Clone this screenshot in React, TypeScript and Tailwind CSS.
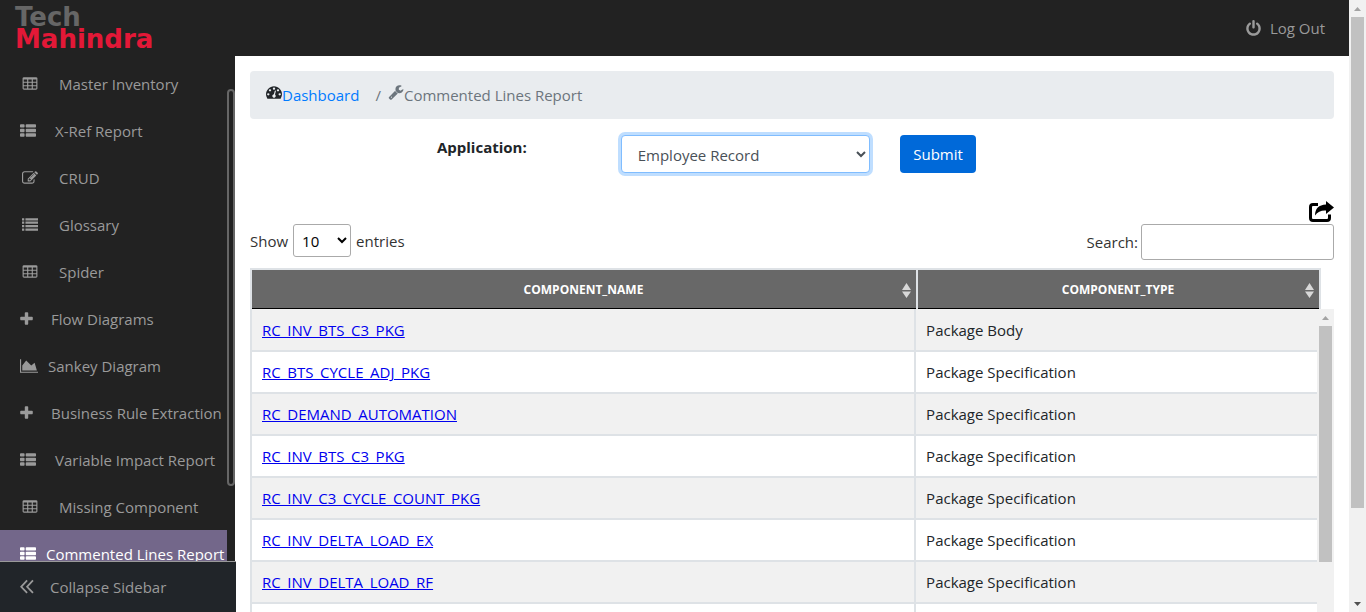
import React from 'react';

type IconName =
  | 'table'
  | 'thList'
  | 'edit'
  | 'list'
  | 'plus'
  | 'area'
  | 'wrench'
  | 'power'
  | 'gauge'
  | 'collapse';

const cell = 'v-192q0-14-9-23t-23-9h-320q-14 0-23 9t-9 23v192q0 14 9 23t23 9h320q14 0 23-9t9-23z';
const tablePath =
  [576, 1088, 1600].map((x) => [608, 992, 1376].map((y) => `M${x} ${y}${cell}`).join('')).join('') +
  'M1728 288v1088q0 66-47 113t-113 47h-1344q-66 0-113-47t-47-113v-1088q0-66 47-113t113-47h1344q66 0 113 47t47 113z';

const thListPath = [224, 736, 1248]
  .map(
    (y) =>
      `M512 ${y}v192q0 40-28 68t-68 28h-320q-40 0-68-28t-28-68v-192q0-40 28-68t68-28h320q40 0 68 28t28 68z` +
      `M1792 ${y}v192q0 40-28 68t-68 28h-960q-40 0-68-28t-28-68v-192q0-40 28-68t68-28h960q40 0 68 28t28 68z`,
  )
  .join('');

const listPath = [128, 512, 896, 1280].map((y) => `M0 ${y}h256v256h-256zM384 ${y}h1408v256h-1408z`).join('');

const icons: Record<IconName, { box: string; d: string }> = {
  table: { box: '0 0 1792 1792', d: tablePath },
  thList: { box: '0 0 1792 1792', d: thListPath },
  list: { box: '0 0 1792 1792', d: listPath },
  edit: {
    box: '0 0 1792 1792',
    d: 'M888 1184l116-116-152-152-116 116v56h96v96h56zm440-720q-16-16-33 1l-350 350q-17 17-1 33t33-1l350-350q17-17 1-33zm80 594v190q0 119-84.5 203.5t-203.5 84.5h-832q-119 0-203.5-84.5t-84.5-203.5v-832q0-119 84.5-203.5t203.5-84.5h832q63 0 117 25 15 7 18 23 3 17-9 29l-49 49q-14 14-32 8-23-6-45-6h-832q-66 0-113 47t-47 113v832q0 66 47 113t113 47h832q66 0 113-47t47-113v-126q0-13 9-22l64-64q15-15 35-7t20 29zm-96-738l288 288-672 672h-288v-288zm444 132l-92 92-288-288 92-92q28-28 68-28t68 28l152 152q28 28 28 68t-28 68z',
  },
  plus: {
    box: '192 0 1408 1792',
    d: 'M1600 736v192q0 40-28 68t-68 28h-416v416q0 40-28 68t-68 28h-192q-40 0-68-28t-28-68v-416h-416q-40 0-68-28t-28-68v-192q0-40 28-68t68-28h416v-416q0-40 28-68t68-28h192q40 0 68 28t28 68v416h416q40 0 68 28t28 68z',
  },
  area: { box: '0 0 2048 1792', d: 'M2048 1536v128H0V128h128v1408h1920zM1664 512l256 896H256V832l448-576 576 576z' },
  wrench: {
    box: '0 0 1792 1792',
    d: 'M448 1472q0-26-19-45t-45-19-45 19-19 45 19 45 45 19 45-19 19-45zm644-420l-682 682q-37 37-90 37-52 0-91-37l-106-108q-38-36-38-90 0-53 38-91l681-681q39 98 114.5 173.5t173.5 114.5zm634-435q0 39-23 106-47 134-164.5 217.5t-258.5 83.5q-185 0-316.5-131.5t-131.5-316.5 131.5-316.5 316.5-131.5q58 0 121.5 16.5t107.5 46.5q16 11 16 28t-16 28l-293 169v224l193 107q5-3 79-48.5t135.5-81 70.5-35.5q15 0 23.5 10t8.5 25z',
  },
  power: {
    box: '0 0 1792 1792',
    d: 'M1664 896q0 156-61 298t-164 245-245 164-298 61-298-61-245-164-164-245-61-298q0-182 80.5-343t226.5-270q43-32 95.5-25t83.5 50q32 42 24.5 94.5t-49.5 84.5q-98 74-151.5 181t-53.5 228q0 104 40.5 198.5t109.5 163.5 163.5 109.5 198.5 40.5 198.5-40.5 163.5-109.5 109.5-163.5 40.5-198.5q0-121-53.5-228t-151.5-181q-42-32-49.5-84.5t24.5-94.5q31-43 84-50t95 25q146 109 226.5 270t80.5 343zm-640-768v640q0 52-38 90t-90 38-90-38-38-90v-640q0-52 38-90t90-38 90 38 38 90z',
  },
  gauge: {
    box: '0 0 1792 1792',
    d: 'M384 1152q0-53-37.5-90.5t-90.5-37.5-90.5 37.5-37.5 90.5 37.5 90.5 90.5 37.5 90.5-37.5 37.5-90.5zm192-448q0-53-37.5-90.5t-90.5-37.5-90.5 37.5-37.5 90.5 37.5 90.5 90.5 37.5 90.5-37.5 37.5-90.5zm428 481l101-382q6-26-7.5-48.5t-38.5-29.5-48 6.5-30 39.5l-101 382q-60 5-107 43.5t-63 98.5q-20 77 20 146t117 89 146-20 89-117q16-60-6-117t-72-91zm660-33q0-53-37.5-90.5t-90.5-37.5-90.5 37.5-37.5 90.5 37.5 90.5 90.5 37.5 90.5-37.5 37.5-90.5zm-640-640q0-53-37.5-90.5t-90.5-37.5-90.5 37.5-37.5 90.5 37.5 90.5 90.5 37.5 90.5-37.5 37.5-90.5zm448 192q0-53-37.5-90.5t-90.5-37.5-90.5 37.5-37.5 90.5 37.5 90.5 90.5 37.5 90.5-37.5 37.5-90.5zm320 448q0 261-141 483-19 29-54 29h-1402q-35 0-54-29-141-221-141-483 0-182 71-348t191-286 286-191 348-71 348 71 286 191 191 286 71 348z',
  },
  collapse: {
    box: '0 0 1408 1792',
    d: 'M650 170l130 130-540 560 540 560-130 130-650-690zM1240 170l130 130-540 560 540 560-130 130-650-690z',
  },
};

function Icon({ name, className }: { name: IconName; className: string }) {
  return (
    <svg viewBox={icons[name].box} className={`shrink-0 fill-current ${className}`} aria-hidden="true">
      <path fillRule="evenodd" d={icons[name].d} />
    </svg>
  );
}

const wide = 'h-4 w-4 ml-[22px] mr-[21px]';
const block = 'h-4 w-4 ml-5 mr-[19px]';
const cross = 'h-4 w-[13px] ml-5 mr-[18px]';

const menu: { label: string; icon: IconName; spacing: string; active?: boolean }[] = [
  { label: 'Master Inventory', icon: 'table', spacing: wide },
  { label: 'X-Ref Report', icon: 'thList', spacing: block },
  { label: 'CRUD', icon: 'edit', spacing: wide },
  { label: 'Glossary', icon: 'list', spacing: wide },
  { label: 'Spider', icon: 'table', spacing: wide },
  { label: 'Flow Diagrams', icon: 'plus', spacing: cross },
  { label: 'Sankey Diagram', icon: 'area', spacing: 'h-4 w-[18px] ml-5 mr-[10px]' },
  { label: 'Business Rule Extraction', icon: 'plus', spacing: cross },
  { label: 'Variable Impact Report', icon: 'thList', spacing: block },
  { label: 'Missing Component', icon: 'table', spacing: wide },
  { label: 'Commented Lines Report', icon: 'thList', spacing: 'h-4 w-4 ml-5 mr-[10px]', active: true },
];

const rows: [string, string][] = [
  ['RC_INV_BTS_C3_PKG', 'Package Body'],
  ['RC_BTS_CYCLE_ADJ_PKG', 'Package Specification'],
  ['RC_DEMAND_AUTOMATION', 'Package Specification'],
  ['RC_INV_BTS_C3_PKG', 'Package Specification'],
  ['RC_INV_C3_CYCLE_COUNT_PKG', 'Package Specification'],
  ['RC_INV_DELTA_LOAD_EX', 'Package Specification'],
  ['RC_INV_DELTA_LOAD_RF', 'Package Specification'],
  ['', ''],
];

function Arrow({ down = false, className }: { down?: boolean; className: string }) {
  return (
    <span className="flex h-[17px] shrink-0 items-center justify-center">
      <svg viewBox="0 0 7 4" className={`h-1 w-[7px] fill-current ${className}`} aria-hidden="true">
        <path d={down ? 'M0 0h7L3.500 4z' : 'M0 4h7L3.500 0z'} />
      </svg>
    </span>
  );
}

function SortHeader({ children }: { children: string }) {
  return (
    <th className="border-2 border-b border-[#dee2e6] border-b-black p-0 font-bold">
      <button type="button" className="flex h-[38px] w-full items-center pt-0.5 pr-[5px] pl-[13px]">
        <span className="flex-1">{children}</span>
        <svg viewBox="0 0 9 15" className="h-[15px] w-[9px] fill-[#d8d8d8]" aria-hidden="true">
          <path d="M0 7L4.500 0 9 7zM0 8.500h9L4.500 15z" />
        </svg>
      </button>
    </th>
  );
}

function Columns() {
  return (
    <colgroup>
      <col className="w-[62.3%]" />
      <col />
    </colgroup>
  );
}

export default function App() {
  return (
    <div className="flex h-screen overflow-hidden bg-white font-['Open_Sans','Noto_Sans',sans-serif] text-[15px] leading-6 text-[#212529]">
      <div className="flex min-w-0 flex-1 flex-col">
        <header className="flex h-14 shrink-0 items-center justify-between bg-[#222] pr-6 pl-[15px] text-[#9a9a9a]">
          <a
            href="#home"
            className="flex flex-col font-['DejaVu_Sans',sans-serif] text-[26px] leading-[22px] font-bold text-[#e31837]"
          >
            <span className="text-[#666]">Tech</span>
            <span>Mahindra</span>
          </a>
          <a href="#logout" className="flex items-center gap-2">
            <Icon name="power" className="h-[17px] w-[17px]" />
            Log Out
          </a>
        </header>

        <div className="flex min-h-0 flex-1">
          <aside className="flex w-[235px] shrink-0 flex-col bg-[#222] text-[#9a9a9a]">
            <div className="flex min-h-0 flex-1">
              <nav className="min-w-0 flex-1 overflow-hidden pt-1">
                <ul>
                  {menu.map((item) => (
                    <li key={item.label}>
                      <a
                        href="#report"
                        className={`flex h-[47px] items-center whitespace-nowrap ${item.active ? 'bg-[#73678a] text-white' : ''}`}
                      >
                        <Icon name={item.icon} className={item.spacing} />
                        {item.label}
                      </a>
                    </li>
                  ))}
                </ul>
              </nav>
              <div className="flex w-2 flex-col pt-[33px]" aria-hidden="true">
                <div className="flex-[396] rounded-sm border-2 border-[#666] bg-[#222]" />
                <div className="flex-[76]" />
              </div>
            </div>
            <button
              type="button"
              className="flex h-[51px] w-[236px] shrink-0 items-center border-t border-[#999] bg-[#212529] pl-5"
            >
              <Icon name="collapse" className="mr-4 h-[18px] w-[14px]" />
              Collapse Sidebar
            </button>
          </aside>

          <main className="flex min-w-0 flex-1 flex-col px-[15px] pt-[15px]">
            <nav className="flex h-12 shrink-0 items-center rounded bg-[#e9ecef] px-4 text-[#6c757d]" aria-label="Breadcrumb">
              <Icon name="gauge" className="mb-[7px] h-4 w-4 text-[#212529]" />
              <a href="#dashboard" className="text-[#007bff]">
                Dashboard
              </a>
              <span className="mr-[7px] ml-4">/</span>
              <Icon name="wrench" className="mb-[7px] h-4 w-4" />
              <span>Commented Lines Report</span>
            </nav>

            <form className="mt-4 flex shrink-0 items-start" onSubmit={(e) => e.preventDefault()}>
              <label htmlFor="application" className="w-[34.2%] pr-[94px] text-right font-bold">
                Application:
              </label>
              <select
                id="application"
                className="h-[38px] w-[23%] rounded border border-[#80bdff] bg-white pt-0.5 pl-3 text-[#495057] shadow-[0_0_0_3px_#bfdeff] outline-none"
              >
                <option>Employee Record</option>
              </select>
              <button type="submit" className="ml-[30px] h-[38px] w-[76px] rounded bg-[#0069d9] text-white">
                Submit
              </button>
            </form>

            <div className="mt-7 flex shrink-0 justify-end">
              <button type="button" aria-label="Export">
                <svg viewBox="0 0 25 21" className="h-[21px] w-[25px]" aria-hidden="true">
                  <path
                    d="M9 3.500H4Q1.500 3.500 1.500 6v11Q1.500 19.500 4 19.500h14Q20.500 19.500 20.500 17v-3.500"
                    fill="none"
                    stroke="#000"
                    strokeWidth="3"
                  />
                  <path d="M17 0L25 6.500 17 13V9.500Q10 9 6 14.500 6 4 17 3.500z" />
                </svg>
              </button>
            </div>

            <div className="mt-0.5 flex shrink-0 items-start justify-between text-[#333]">
              <label className="flex items-center gap-[5px]">
                Show
                <select className="h-[33px] w-[58px] rounded-[3px] border border-[#aaa] bg-white pl-1 text-black">
                  <option>10</option>
                </select>
                entries
              </label>
              <label className="flex items-center gap-[3px]">
                Search:
                <input type="search" className="h-9 w-[193px] rounded-[3px] border border-[#aaa] bg-white px-2" />
              </label>
            </div>

            <div className="mt-2 flex min-h-0 flex-1 flex-col">
              <div className="shrink-0 pr-[13px]">
                <table className="w-full table-fixed border-collapse bg-[#686868] text-xs text-white">
                  <Columns />
                  <thead>
                    <tr>
                      <SortHeader>COMPONENT_NAME</SortHeader>
                      <SortHeader>COMPONENT_TYPE</SortHeader>
                    </tr>
                  </thead>
                </table>
              </div>
              <div className="flex min-h-0 flex-1">
                <div className="min-w-0 flex-1 overflow-hidden">
                  <table className="w-full table-fixed border-collapse" aria-label="Commented lines">
                    <Columns />
                    <tbody>
                      {rows.map(([name, type], i) => (
                        <tr key={i} className="h-[42px] border-b-2 border-[#dee2e6] odd:bg-[#f1f1f1]">
                          <td className="border-x-2 border-[#dee2e6] px-2.5 py-0">
                            {name && (
                              <a href="#component" className="text-[#0000ee] underline">
                                {name}
                              </a>
                            )}
                          </td>
                          <td className="px-2.5 py-0">{type}</td>
                        </tr>
                      ))}
                    </tbody>
                  </table>
                </div>
                <div className="flex w-[17px] shrink-0 flex-col bg-[#f1f1f1] px-0.5" aria-hidden="true">
                  <Arrow className="text-[#a3a3a3]" />
                  <div className="flex-[236] bg-[#c1c1c1]" />
                  <div className="flex-[50]" />
                </div>
              </div>
            </div>
          </main>
        </div>
      </div>

      <div className="flex w-[17px] shrink-0 flex-col bg-[#f1f1f1] px-0.5" aria-hidden="true">
        <Arrow className="text-[#a3a3a3]" />
        <div className="flex-[491] bg-[#c1c1c1]" />
        <div className="flex-[87]" />
        <Arrow down className="text-[#505050]" />
      </div>
    </div>
  );
}
